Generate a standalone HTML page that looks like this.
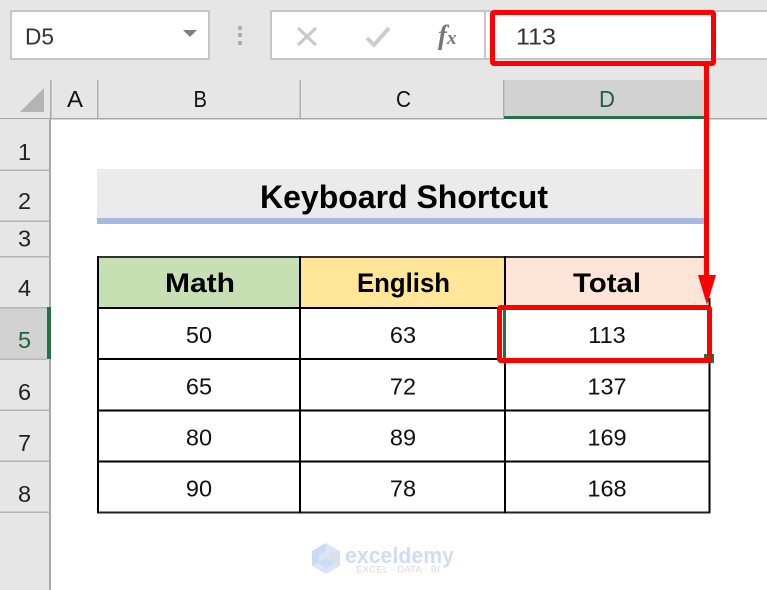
<!DOCTYPE html>
<html><head><meta charset="utf-8"><style>
html,body{margin:0;padding:0;background:#fff;width:767px;height:590px;overflow:hidden}
svg{display:block;filter:blur(.35px)}
text{font-family:"Liberation Sans",sans-serif}
.h{font-size:23.5px;fill:#2a2a2a}
.n{font-size:23.5px;fill:#222}
.c{font-size:23.5px;fill:#111}
.b{font-size:26.5px;font-weight:bold;fill:#000}
</style></head><body>
<svg width="767" height="590" viewBox="0 0 767 590" xmlns="http://www.w3.org/2000/svg">
<rect width="767" height="590" fill="#fff"/>
<!-- top bar -->
<rect width="767" height="119" fill="#e6e6e6"/>
<rect x="11" y="11" width="198" height="48" fill="#fff" stroke="#c6c6c6" stroke-width="2"/>
<path d="M183 30H197L190 37Z" fill="#808080"/>
<text class="h" x="25" y="44.500" textLength="29" lengthAdjust="spacingAndGlyphs" style="fill:#333">D5</text>
<rect x="238" y="26" width="4" height="4" fill="#b0b0b0"/><rect x="238" y="33" width="4" height="4" fill="#b0b0b0"/><rect x="238" y="41" width="4" height="4" fill="#b0b0b0"/>
<rect x="271" y="11" width="214" height="48" fill="#fff" stroke="#c6c6c6" stroke-width="2"/>
<path d="M298 28L316 45M316 28L298 45" stroke="#c8c8c8" stroke-width="3" fill="none"/>
<path d="M367 38L374 45L389 28" stroke="#cccccc" stroke-width="4" fill="none"/>
<text x="438" y="44" font-style="italic" font-weight="bold" fill="#777" style="font-family:'Liberation Serif',serif"><tspan font-size="27">f</tspan><tspan font-size="19">x</tspan></text>
<rect x="485" y="11" width="290" height="48" fill="#fff" stroke="#c6c6c6" stroke-width="2"/>
<text class="h" x="516" y="44.500" textLength="40" lengthAdjust="spacingAndGlyphs" style="fill:#333">113</text>
<!-- column headers -->
<rect x="504" y="80" width="205" height="36" fill="#d2d2d2"/>
<rect x="503" y="80" width="1.500" height="38" fill="#b0b0b0"/>
<rect x="504" y="116" width="205" height="3" fill="#217346"/>
<rect x="0" y="118" width="504" height="1.500" fill="#a8a8a8"/>
<rect x="709" y="118" width="58" height="1.500" fill="#a8a8a8"/>
<path d="M20 112L44 88V112Z" fill="#b4b4b4"/>
<rect x="97" y="80" width="1.500" height="38" fill="#b0b0b0"/>
<rect x="299.500" y="80" width="1.500" height="38" fill="#b0b0b0"/>
<rect x="50" y="80" width="1.500" height="38" fill="#a8a8a8"/>
<text class="h" x="67" y="107" textLength="16" lengthAdjust="spacingAndGlyphs" style="fill:#111">A</text>
<text class="h" x="193.500" y="107" textLength="13.500" lengthAdjust="spacingAndGlyphs" style="fill:#111">B</text>
<text class="h" x="396" y="107" textLength="15" lengthAdjust="spacingAndGlyphs" style="fill:#111">C</text>
<text class="h" x="599" y="107" textLength="16" lengthAdjust="spacingAndGlyphs" style="fill:#1f5f45">D</text>
<!-- row headers -->
<rect x="0" y="119" width="50" height="471" fill="#e6e6e6"/>
<rect x="0" y="308" width="48" height="51" fill="#d2d2d2"/>
<rect x="49" y="119" width="2" height="471" fill="#a8a8a8"/>
<rect x="47" y="307" width="4" height="52" fill="#217346"/>
<g fill="#b4b4b4">
<rect y="169.500" width="50" height="1.500"/><rect y="220.500" width="50" height="1.500"/><rect y="256" width="50" height="1.500"/><rect y="307" width="47" height="1.500"/><rect y="358.500" width="47" height="1.500"/><rect y="409.500" width="50" height="1.500"/><rect y="460.500" width="50" height="1.500"/><rect y="511.500" width="50" height="1.500"/>
</g>
<g text-anchor="middle">
<text class="n" x="24.500" y="160">1</text>
<text class="n" x="24.500" y="209">2</text>
<text class="n" x="24.500" y="246.500">3</text>
<text class="n" x="24.500" y="296">4</text>
<text class="n" x="24.500" y="348" style="fill:#1f5f45">5</text>
<text class="n" x="24.500" y="400">6</text>
<text class="n" x="24.500" y="451">7</text>
<text class="n" x="24.500" y="502">8</text>
</g>
<!-- title -->
<rect x="97" y="169" width="608" height="49" fill="#ebebeb"/>
<rect x="97" y="218" width="608" height="6" fill="#a6b8df"/>
<text x="260" y="208" font-size="32" font-weight="bold" fill="#000" textLength="288" lengthAdjust="spacingAndGlyphs">Keyboard Shortcut</text>
<!-- table -->
<rect x="98" y="257" width="202" height="50" fill="#c6e0b4"/>
<rect x="300" y="257" width="204" height="50" fill="#ffe699"/>
<rect x="505" y="257" width="200" height="50" fill="#fce4d6"/>
<g fill="#000">
<rect x="97" y="256" width="608" height="2" fill="#333"/>
<rect x="97" y="307" width="613" height="2"/>
<rect x="97" y="358" width="613" height="2"/>
<rect x="97" y="409.500" width="613" height="2"/>
<rect x="97" y="460.500" width="613" height="2"/>
<rect x="97" y="511.500" width="613" height="2" fill="#222"/>
<rect x="97" y="256" width="2" height="257"/>
<rect x="299" y="256" width="2" height="257"/>
<rect x="504" y="256" width="2" height="257"/>
<rect x="708.500" y="298" width="2" height="215"/>
</g>
<text class="b" x="165" y="292" textLength="70" lengthAdjust="spacingAndGlyphs">Math</text>
<text class="b" x="357" y="292" textLength="93" lengthAdjust="spacingAndGlyphs">English</text>
<text class="b" x="573" y="292" textLength="68" lengthAdjust="spacingAndGlyphs">Total</text>
<g text-anchor="middle">
<text class="c" x="199" y="343">50</text><text class="c" x="403" y="343">63</text><text class="c" x="607" y="343">113</text>
<text class="c" x="199" y="394.500">65</text><text class="c" x="403" y="394.500">72</text><text class="c" x="607" y="394.500">137</text>
<text class="c" x="199" y="445.500">80</text><text class="c" x="403" y="445.500">89</text><text class="c" x="607" y="445.500">169</text>
<text class="c" x="199" y="496.500">90</text><text class="c" x="403" y="496.500">78</text><text class="c" x="607" y="496.500">168</text>
</g>
<!-- selection accents -->
<rect x="503" y="307" width="3" height="54" fill="#217346"/>
<rect x="704" y="354" width="10" height="9" fill="#217346"/>
<!-- red annotations -->
<rect x="492.500" y="12.500" width="221" height="51" rx="1.500" fill="none" stroke="#ff0000" stroke-width="5"/>
<rect x="704" y="64" width="5" height="215" fill="#ff0000"/>
<path d="M698 275H716L707 305Z" fill="#ff0000"/>
<rect x="499.500" y="307.500" width="210" height="53" rx="1.500" fill="none" stroke="#ff0000" stroke-width="5"/>
<!-- watermark -->
<path d="M326 543L340 551V566L326 574L312 566V551Z" fill="#dbe5f8"/>
<path d="M326 543L312 551V566L319 562V555L326 551Z" fill="#cbd9f4"/>
<path d="M330 552L340 551V566L331 561Z" fill="#dcdfe5"/>
<path d="M326 558L335 563L326 568L317 563Z" fill="#cbdcf8"/>
<text x="345" y="563" font-size="22" font-weight="bold" fill="#cfdcf5" textLength="109" lengthAdjust="spacingAndGlyphs">exceldemy</text>
<text x="356" y="572.500" font-size="9.500" fill="#d8d8d8" textLength="84" lengthAdjust="spacing">EXCEL - DATA - BI</text>
</svg>
</body></html>
